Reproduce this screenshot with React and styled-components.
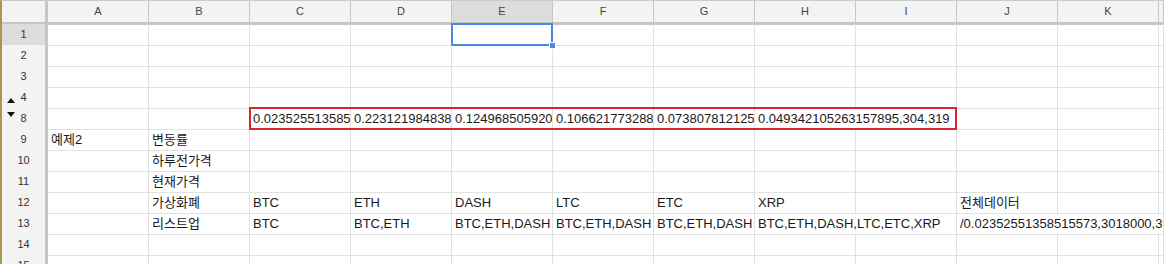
import React from 'react';
import styled, { createGlobalStyle } from 'styled-components';

const GlobalStyle = createGlobalStyle`
  html, body {
    margin: 0;
    padding: 0;
    background: #fff;
    overflow: hidden;
  }
`;

const COLS = ['A', 'B', 'C', 'D', 'E', 'F', 'G', 'H', 'I', 'J', 'K', 'L'];
const TEMPLATE = '46px repeat(11, 101px) 1fr';

const Sheet = styled.div`
  width: 100%;
  height: 264px;
  overflow: hidden;
  border-left: 2px solid #a8984e;
  border-top: 1px solid #cbcbcb;
  box-sizing: border-box;
  font-family: 'Liberation Sans', 'Noto Sans CJK KR', sans-serif;
`;

const HeadRow = styled.div`
  display: grid;
  grid-template-columns: ${TEMPLATE};
  height: 23px;
`;

const Row = styled.div`
  display: grid;
  grid-template-columns: ${TEMPLATE};
  height: 21px;
`;

const Corner = styled.div`
  background: #f3f3f3;
  border-right: 3px solid #c6c6c6;
  border-bottom: 3px solid #c6c6c6;
`;

const ColHead = styled.div`
  background: ${p => (p.$selected ? '#dddddd' : '#f3f3f3')};
  border-right: 1px solid #c6c6c6;
  border-bottom: 3px solid #c6c6c6;
  color: #444;
  font-size: 11px;
  line-height: 21px;
  text-align: center;
`;

const RowHead = styled.div`
  position: relative;
  background: ${p => (p.$selected ? '#dddddd' : '#f3f3f3')};
  border-right: 3px solid #c6c6c6;
  border-bottom: 1px solid #dadada;
  color: #333;
  font-size: 11px;
  line-height: 21px;
  text-align: center;
`;

const Arrow = styled.span`
  position: absolute;
  left: 5px;
  top: ${p => (p.$dir === 'up' ? '11px' : '4px')};
  width: 0;
  height: 0;
  border-left: 4px solid transparent;
  border-right: 4px solid transparent;
  ${p =>
    p.$dir === 'up'
      ? 'border-bottom: 5px solid #111;'
      : 'border-top: 5px solid #111;'}
`;

const Cell = styled.div`
  grid-row: 1;
  grid-column: ${p => p.$col} / span ${p => p.$span};
  position: relative;
  border-right: 1px solid #e2e2e2;
  border-bottom: 1px solid #e2e2e2;
  padding: 2px 0 0 3px;
  font-size: 13px;
  line-height: 18px;
  color: #1a1a1a;
  white-space: nowrap;
  overflow: ${p => (p.$selected ? 'visible' : 'hidden')};
  text-overflow: clip;
  ${p =>
    p.$selected &&
    `
    z-index: 2;
    &::before {
      content: '';
      position: absolute;
      left: -1px;
      top: -1px;
      right: -1px;
      bottom: -1px;
      border: 2px solid #4a86e8;
    }
    &::after {
      content: '';
      position: absolute;
      right: -4px;
      bottom: -4px;
      width: 7px;
      height: 7px;
      background: #4a86e8;
      border: 1px solid #fff;
      box-sizing: border-box;
    }
  `}
`;

const RangeBox = styled.div`
  grid-row: 1;
  grid-column: ${p => p.$from} / ${p => p.$to};
  margin: -1px 0 0 -1px;
  border: 2px solid #d9262e;
  box-sizing: border-box;
  pointer-events: none;
  z-index: 3;
`;

const rows = [
  { n: 1, selected: 'E' },
  { n: 2 },
  { n: 3 },
  { n: 4, arrow: 'up' },
  {
    n: 8,
    arrow: 'down',
    box: { from: 'C', to: 'J' },
    cells: {
      C: '0.02352551358515573',
      D: '0.22312198483866116',
      E: '0.12496850592084146',
      F: '0.10662177328844016',
      G: '0.07380781212597811',
      H: { text: '0.049342105263157895,304,319', span: 2 },
    },
  },
  { n: 9, cells: { A: '예제2', B: '변동률' } },
  { n: 10, cells: { B: '하루전가격' } },
  { n: 11, cells: { B: '현재가격' } },
  {
    n: 12,
    cells: { B: '가상화폐', C: 'BTC', D: 'ETH', E: 'DASH', F: 'LTC', G: 'ETC', H: 'XRP', J: '전체데이터' },
  },
  {
    n: 13,
    cells: {
      B: '리스트업',
      C: 'BTC',
      D: 'BTC,ETH',
      E: 'BTC,ETH,DASH',
      F: 'BTC,ETH,DASH',
      G: 'BTC,ETH,DASH',
      H: { text: 'BTC,ETH,DASH,LTC,ETC,XRP', span: 2 },
      J: { text: '/0.02352551358515573,3018000,3089000/0.22312198483866116,343000', span: 3 },
    },
  },
  { n: 14 },
  { n: 15 },
];

function SheetRow({ row }) {
  const cells = row.cells || {};
  const out = [];
  for (let i = 0; i < COLS.length; ) {
    const key = COLS[i];
    const raw = cells[key];
    const text = typeof raw === 'object' ? raw.text : raw;
    const span = typeof raw === 'object' ? raw.span : 1;
    out.push(
      <Cell key={key} $col={i + 2} $span={span} $selected={row.selected === key}>
        {text}
      </Cell>
    );
    i += span;
  }
  return (
    <Row>
      <RowHead $selected={!!row.selected}>
        {row.arrow && <Arrow $dir={row.arrow} />}
        {row.n}
      </RowHead>
      {out}
      {row.box && (
        <RangeBox
          $from={COLS.indexOf(row.box.from) + 2}
          $to={COLS.indexOf(row.box.to) + 2}
        />
      )}
    </Row>
  );
}

export default function App() {
  return (
    <>
      <GlobalStyle />
      <Sheet>
        <HeadRow>
          <Corner />
          {COLS.map(c => (
            <ColHead key={c} $selected={c === 'E'}>
              {c === 'L' ? '' : c}
            </ColHead>
          ))}
        </HeadRow>
        {rows.map(r => (
          <SheetRow key={r.n} row={r} />
        ))}
      </Sheet>
    </>
  );
}
